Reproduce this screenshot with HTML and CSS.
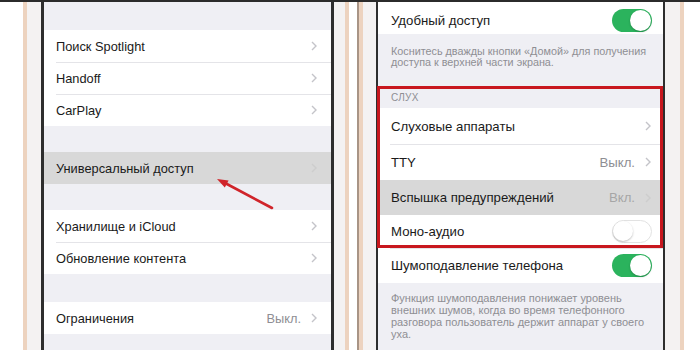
FILE: index.html
```html
<!DOCTYPE html>
<html lang="ru">
<head>
<meta charset="utf-8">
<link rel="stylesheet" href="styles.css">
</head>
<body>
<div class="topline"></div>
<div class="phones">
  <div class="phone phone-a">
    <div class="bezel">
      <div class="screen screen-a">
        <div class="gap gap-top"></div>
        <div class="group">
          <div class="row"><span class="label">Поиск Spotlight</span><svg class="chev" viewBox="0 0 6 10"><polyline points="1,1 5,5 1,9"/></svg></div>
          <div class="row"><span class="label">Handoff</span><svg class="chev" viewBox="0 0 6 10"><polyline points="1,1 5,5 1,9"/></svg></div>
          <div class="row"><span class="label">CarPlay</span><svg class="chev" viewBox="0 0 6 10"><polyline points="1,1 5,5 1,9"/></svg></div>
        </div>
        <div class="gap gap-26"></div>
        <div class="group">
          <div class="row row-hl"><span class="label">Универсальный доступ</span><svg class="chev" viewBox="0 0 6 10"><polyline points="1,1 5,5 1,9"/></svg></div>
        </div>
        <div class="gap gap-26"></div>
        <div class="group">
          <div class="row"><span class="label">Хранилище и iCloud</span><svg class="chev" viewBox="0 0 6 10"><polyline points="1,1 5,5 1,9"/></svg></div>
          <div class="row"><span class="label">Обновление контента</span><svg class="chev" viewBox="0 0 6 10"><polyline points="1,1 5,5 1,9"/></svg></div>
        </div>
        <div class="gap gap-28"></div>
        <div class="group">
          <div class="row"><span class="label">Ограничения</span><span class="value">Выкл.</span><svg class="chev" viewBox="0 0 6 10"><polyline points="1,1 5,5 1,9"/></svg></div>
        </div>
      </div>
    </div>
  </div>
  <div class="phone phone-b">
    <div class="edge">
      <div class="bezel">
        <div class="screen screen-b">
          <div class="group">
            <div class="row row-first"><span class="label">Удобный доступ</span><span class="toggle on"></span></div>
          </div>
          <div class="footer footer-1">Коснитесь дважды кнопки «Домой» для получения<br>доступа к верхней части экрана.</div>
          <div class="header">СЛУХ</div>
          <div class="group">
            <div class="row h36"><span class="label">Слуховые аппараты</span><svg class="chev" viewBox="0 0 6 10"><polyline points="1,1 5,5 1,9"/></svg></div>
            <div class="row h36"><span class="label">TTY</span><span class="value">Выкл.</span><svg class="chev" viewBox="0 0 6 10"><polyline points="1,1 5,5 1,9"/></svg></div>
            <div class="row row-hl h35"><span class="label">Вспышка предупреждений</span><span class="value">Вкл.</span><svg class="chev" viewBox="0 0 6 10"><polyline points="1,1 5,5 1,9"/></svg></div>
            <div class="row h33"><span class="label">Моно-аудио</span><span class="toggle off"></span></div>
            <div class="row h35"><span class="label">Шумоподавление телефона</span><span class="toggle on"></span></div>
          </div>
          <div class="footer footer-2">Функция шумоподавления понижает уровень<br>внешних шумов, когда во время телефонного<br>разговора пользователь держит аппарат у своего<br>уха.</div>
        </div>
      </div>
    </div>
  </div>
</div>
<div class="redbox"></div>
<svg class="arrow" viewBox="0 0 70 45" width="70" height="45">
  <line x1="62" y1="38" x2="15" y2="13"/>
  <polygon points="7,9 18.6,10.6 14.8,17.6"/>
</svg>
</body>
</html>
```

FILE: styles.css
```css
* { box-sizing: border-box; }

body {
  margin: 0;
  width: 700px;
  height: 350px;
  overflow: hidden;
  background: #ffffff;
  position: relative;
  font-family: "Liberation Sans", Arial, sans-serif;
  color: #1a1a1a;
}

.topline {
  height: 2px;
  background: #2b2b2b;
}

.phones {
  display: flex;
  height: 348px;
}

.phone {
  display: flex;
  height: 100%;
  background: #ffffff;
}

.phone-a {
  width: 352px;
  padding-left: 23px;
}

.phone-b {
  width: 348px;
  padding-left: 5px;
}

.edge {
  display: flex;
  border-left: 2px solid #a89486;
}

.bezel {
  display: flex;
  height: 100%;
  background: #f4f2f2;
  border-left: 4px solid #edd3bf;
  border-right: 4px solid #edd3bf;
}

.phone-a .bezel { padding: 0 11px 0 14px; }
.phone-b .bezel { padding: 0 15px 0 13px; }

.screen {
  display: flex;
  flex-direction: column;
  background: #efeff4;
  border-left: 3px solid #2e2e2e;
  border-right: 3px solid #2e2e2e;
  overflow: hidden;
}

.screen-a { width: 293px; }
.screen-b { width: 289px; border-left-width: 2px; border-right-width: 2px; }

.gap-top { height: 28px; }
.gap-26 { height: 26px; }
.gap-28 { height: 28px; }

.group { background: #ffffff; }

.row {
  position: relative;
  display: flex;
  align-items: center;
  height: 32px;
  background: #ffffff;
}

.screen-a .row {
  font-size: 12.8px;
  padding: 0 12px 0 12px;
}

.screen-b .row {
  font-size: 13.2px;
  padding: 0 11px 0 13px;
}

.row + .row::before {
  content: "";
  position: absolute;
  left: 12px;
  right: 0;
  top: 0;
  height: 1px;
  background: #e4e4e8;
}

.row-first {
  height: 32px;
  padding-top: 4px !important;
}

.h36 { height: 36px; }
.h35 { height: 35px; }
.h33 { height: 33px; }

.row-hl { background: #d8d8d8; }
.row-hl + .row::before, .row-hl::before { display: none; }

.label { flex: 1; white-space: nowrap; }

.value {
  color: #8e8e93;
  margin-right: 10px;
}

.row-hl .value { color: #a6a6a6; }

.chev {
  width: 6px;
  height: 10px;
  flex: none;
  fill: none;
  stroke: #c4c4c9;
  stroke-width: 1.4;
  margin-right: 2px;
}

.screen-b .chev { margin-right: 1px; }

.row-hl .chev { stroke: #cdcdcd; }

.toggle {
  position: relative;
  width: 40px;
  height: 23px;
  border-radius: 12px;
  flex: none;
}

.toggle.on { background: #2bb35d; }

.toggle.off {
  background: #ffffff;
  border: 1.5px solid #e2e2e2;
}

.toggle::after {
  content: "";
  position: absolute;
  top: 1px;
  width: 21px;
  height: 21px;
  border-radius: 50%;
  background: #ffffff;
  box-shadow: 0 1px 2px rgba(0,0,0,0.25);
}

.toggle.on::after { right: 1px; }
.toggle.off::after { left: 0; top: 0; width: 20px; height: 20px; }

.footer {
  color: #8e8e93;
  padding-left: 13px;
  white-space: nowrap;
}

.footer-1 {
  height: 52px;
  padding-top: 12px;
  font-size: 10.8px;
  line-height: 11px;
}

.footer-2 {
  flex: 1;
  padding-top: 9px;
  font-size: 11px;
  line-height: 12px;
}

.header {
  height: 22px;
  display: flex;
  align-items: center;
  padding-left: 13px;
  font-size: 10px;
  color: #8e8e93;
  letter-spacing: 0.3px;
}

.redbox {
  position: absolute;
  left: 377px;
  top: 86px;
  width: 286px;
  height: 162px;
  border: 3px solid #c8171e;
}

.arrow {
  position: absolute;
  left: 210px;
  top: 170px;
}

.arrow line {
  stroke: #d0242a;
  stroke-width: 2.6;
  stroke-linecap: round;
}

.arrow polygon { fill: #d0242a; }
```
